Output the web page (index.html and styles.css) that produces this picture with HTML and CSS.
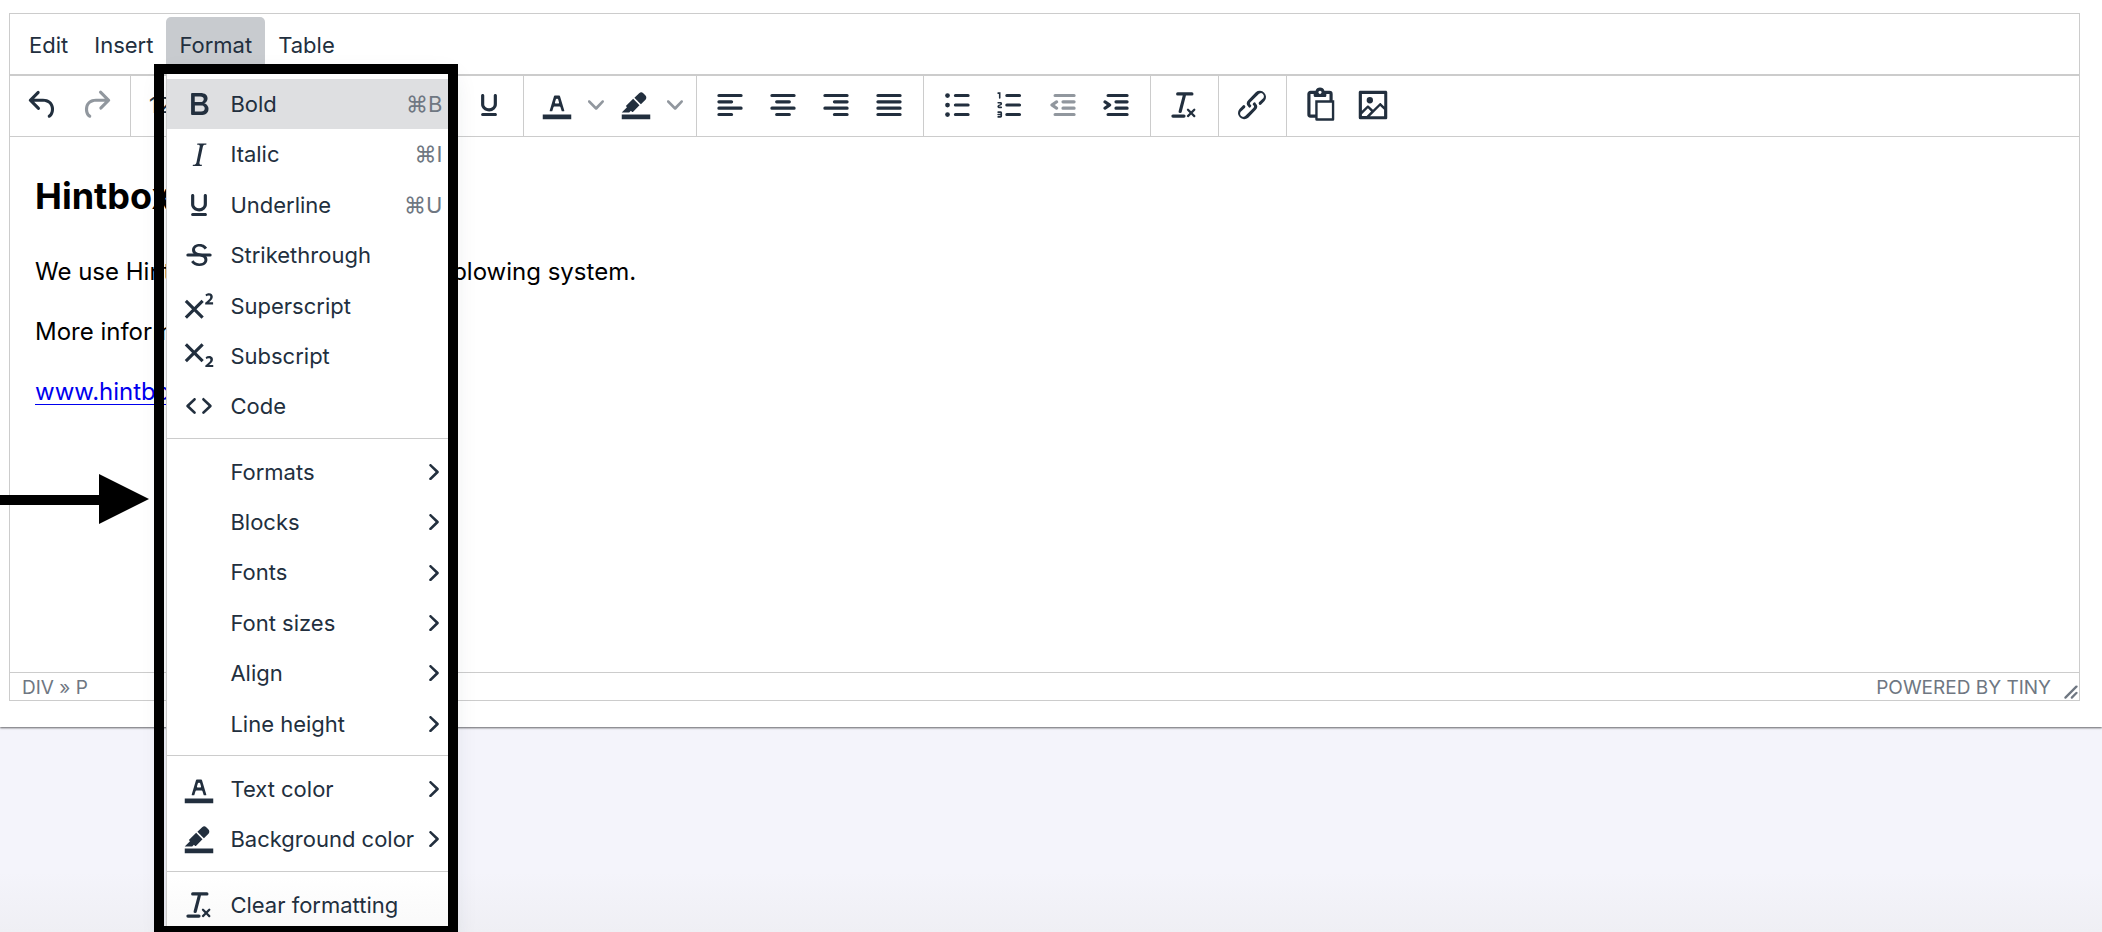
FILE: index.html
```html
<!DOCTYPE html>
<html lang="en">
<head>
<meta charset="utf-8">
<title>Editor</title>
<link rel="stylesheet" href="styles.css">
</head>
<body>
<svg class="sprite" aria-hidden="true">
  <symbol id="undo" viewBox="0 0 24 24"><path d="M6.4 8H12c3.7 0 6.2 2 6.8 5.1.6 2.7-.4 5.6-2.3 6.8a1 1 0 0 1-1-1.8c1.1-.6 1.8-2.7 1.4-4.6-.5-2.1-2.1-3.5-4.9-3.5H6.4l3.3 3.3a1 1 0 1 1-1.4 1.4l-5-5a1 1 0 0 1 0-1.4l5-5a1 1 0 0 1 1.4 1.4L6.4 8Z"/></symbol>
  <symbol id="redo" viewBox="0 0 24 24"><path d="M17.6 10H12c-2.8 0-4.4 1.4-4.9 3.5-.4 2 .3 4 1.4 4.6a1 1 0 1 1-1 1.8c-2-1.2-2.9-4.1-2.3-6.8.6-3 3-5.1 6.8-5.1h5.6l-3.3-3.3a1 1 0 1 1 1.4-1.4l5 5a1 1 0 0 1 0 1.4l-5 5a1 1 0 0 1-1.4-1.4l3.3-3.3Z"/></symbol>
  <symbol id="bold" viewBox="0 0 24 24"><path fill-rule="evenodd" d="M7.8 19c-.3 0-.5 0-.6-.2l-.2-.5V5.7c0-.2 0-.4.2-.5l.6-.2h5c1.5 0 2.7.3 3.5 1 .7.6 1.1 1.4 1.1 2.5a3 3 0 0 1-.6 1.9c-.4.6-1 1-1.6 1.2.4.1.9.3 1.3.6s.8.7 1 1.2c.4.4.5 1 .5 1.6 0 1.3-.4 2.3-1.3 3-.8.7-2.1 1-3.8 1H7.8Zm5-8.3c.6 0 1.2-.1 1.6-.5.4-.3.6-.7.6-1.3 0-1.1-.8-1.7-2.3-1.7H9.3v3.5h3.4Zm.5 6c.7 0 1.3-.1 1.7-.4.4-.4.6-.9.6-1.5s-.2-1-.7-1.4c-.4-.3-1-.4-2-.4H9.4v3.8h4Z"/></symbol>
  <symbol id="italic" viewBox="0 0 24 24"><path d="m16.7 4.7-.1.9h-.3c-.6 0-1 0-1.4.3-.3.3-.4.6-.5 1.1l-2.1 9.8v.6c0 .5.4.8 1.4.8h.2l-.2.8H8l.2-.8h.2c1.1 0 1.8-.5 2-1.5l2-9.8.1-.5c0-.6-.4-.8-1.4-.8h-.3l.2-.9h5.8Z"/></symbol>
  <symbol id="underline" viewBox="0 0 24 24"><path d="M16 5c.6 0 1 .4 1 1v5.5a4 4 0 0 1-.4 1.8l-1 1.4a5.3 5.3 0 0 1-5.5 1 5 5 0 0 1-1.6-1c-.5-.4-.8-.9-1.1-1.4a4 4 0 0 1-.4-1.8V6c0-.6.4-1 1-1s1 .4 1 1v5.5c0 .3 0 .6.2 1l.6.7a3.3 3.3 0 0 0 2.2.8 3.4 3.4 0 0 0 2.2-.8c.3-.2.4-.5.6-.8l.2-.9V6c0-.6.4-1 1-1ZM8 17h8c.6 0 1 .4 1 1s-.4 1-1 1H8a1 1 0 0 1 0-2Z"/></symbol>
  <symbol id="strike" viewBox="0 0 24 24"><path d="M15.6 8.5c-.5-.7-1-1.1-1.3-1.3-.6-.4-1.3-.6-2-.6-2.7 0-2.8 1.7-2.8 2.1 0 1.6 1.8 2 3.2 2.3 4.4.9 4.6 2.8 4.6 3.9 0 1.4-.7 4.1-5 4.1A6.2 6.2 0 0 1 7 16.4l1.5-1.1c.4.6 1.6 2 3.7 2 1.6 0 2.5-.4 3-1.2.4-.8.3-2-.8-2.6-.7-.4-1.6-.7-2.9-1-1-.2-3.9-.8-3.9-3.6C7.6 6 10.3 5 12.4 5c2.9 0 4.2 1.6 4.7 2.4l-1.5 1.1Z"/><path d="M5 11h14a1 1 0 0 1 0 2H5a1 1 0 0 1 0-2Z"/></symbol>
  <symbol id="sup" viewBox="0 0 24 24"><path d="M15 9.4 10.4 14l4.6 4.6-1.4 1.4L9 15.4 4.4 20 3 18.6 7.6 14 3 9.4 4.4 8 9 12.6 13.6 8 15 9.4Zm5.9 1.6h-5v-1l1-.8 1.7-1.6c.3-.5.5-.9.5-1.3 0-.3 0-.5-.2-.7-.2-.2-.5-.3-.9-.3l-.8.2-.7.4-.4-1.2c.2-.2.5-.4 1-.5.3-.2.8-.2 1.2-.2.8 0 1.4.2 1.8.6.4.4.6 1 .6 1.6 0 .5-.2 1-.5 1.5l-1.3 1.4-.6.5h2.6V11Z"/></symbol>
  <symbol id="sub" viewBox="0 0 24 24"><path d="m10.4 10 4.6 4.6-1.4 1.4L9 11.4 4.4 16 3 14.6 7.6 10 3 5.4 4.4 4 9 8.6 13.6 4 15 5.4 10.4 10ZM21 19h-5v-1l1-.8 1.7-1.6c.3-.4.5-.8.5-1.2 0-.3 0-.6-.2-.7-.2-.2-.5-.3-.9-.3a2 2 0 0 0-.8.2l-.7.3-.4-1.1 1-.6 1.2-.2c.8 0 1.4.3 1.8.7.4.4.6.9.6 1.5s-.2 1.1-.5 1.6a8 8 0 0 1-1.3 1.3l-.6.6h2.6V19Z"/></symbol>
  <symbol id="code" viewBox="0 0 24 24"><path d="M9.8 15.7c.3.3.3.8 0 1-.3.4-.9.4-1.2 0l-4.4-4.1a.8.8 0 0 1 0-1.2l4.4-4.2c.3-.3.9-.3 1.2 0 .3.3.3.8 0 1.1L6 12l3.8 3.7ZM14.2 15.7c-.3.3-.3.8 0 1 .4.4.9.4 1.2 0l4.4-4.1c.3-.3.3-.9 0-1.2l-4.4-4.2a.8.8 0 0 0-1.2 0c-.3.3-.3.8 0 1.1L18 12l-3.8 3.7Z"/></symbol>
  <symbol id="textcolor" viewBox="0 0 24 24"><path d="M3 18h18v3H3z"/><path fill-rule="evenodd" d="M8.7 16h-.8a.5.5 0 0 1-.5-.6l2.7-9c.1-.3.3-.4.5-.4h2.8c.2 0 .4.1.5.4l2.7 9a.5.5 0 0 1-.5.6h-.8a.5.5 0 0 1-.4-.4l-.7-2.2c0-.3-.3-.4-.5-.4h-3.4c-.2 0-.4.1-.5.4l-.7 2.2c0 .3-.2.4-.4.4Zm2.6-7.6-.6 2a.5.5 0 0 0 .5.6h1.6a.5.5 0 0 0 .5-.6l-.6-2c0-.3-.3-.4-.5-.4h-.4c-.2 0-.4.1-.5.4Z"/></symbol>
  <symbol id="highlight" viewBox="0 0 24 24"><path d="M3 18h18v3H3z"/><path d="M7.7 16.7H3l3.3-3.3-.7-.8L10.2 8l4 4.1-4 4.2c-.2.2-.6.2-.8 0l-.6-.7-1.1 1.1Zm5-7.5L11 7.4l3-2.9a2 2 0 0 1 2.6 0L18 6c.7.7.7 2 0 2.7l-2.9 2.9-1.8-1.8-.5-.6"/></symbol>
  <symbol id="left" viewBox="0 0 24 24"><path d="M5 5h14a1 1 0 0 1 0 2H5a1 1 0 0 1 0-2Zm0 4h8a1 1 0 0 1 0 2H5a1 1 0 0 1 0-2Zm0 8h8a1 1 0 0 1 0 2H5a1 1 0 0 1 0-2Zm0-4h14a1 1 0 0 1 0 2H5a1 1 0 0 1 0-2Z"/></symbol>
  <symbol id="center" viewBox="0 0 24 24"><path d="M5 5h14a1 1 0 0 1 0 2H5a1 1 0 0 1 0-2Zm3 4h8a1 1 0 0 1 0 2H8a1 1 0 0 1 0-2Zm0 8h8a1 1 0 0 1 0 2H8a1 1 0 0 1 0-2Zm-3-4h14a1 1 0 0 1 0 2H5a1 1 0 0 1 0-2Z"/></symbol>
  <symbol id="right" viewBox="0 0 24 24"><path d="M5 5h14a1 1 0 0 1 0 2H5a1 1 0 0 1 0-2Zm6 4h8a1 1 0 0 1 0 2h-8a1 1 0 0 1 0-2Zm0 8h8a1 1 0 0 1 0 2h-8a1 1 0 0 1 0-2Zm-6-4h14a1 1 0 0 1 0 2H5a1 1 0 0 1 0-2Z"/></symbol>
  <symbol id="justify" viewBox="0 0 24 24"><path d="M5 5h14a1 1 0 0 1 0 2H5a1 1 0 0 1 0-2Zm0 4h14a1 1 0 0 1 0 2H5a1 1 0 0 1 0-2Zm0 4h14a1 1 0 0 1 0 2H5a1 1 0 0 1 0-2Zm0 4h14a1 1 0 0 1 0 2H5a1 1 0 0 1 0-2Z"/></symbol>
  <symbol id="bullets" viewBox="0 0 24 24"><path d="M11 5h8a1 1 0 0 1 0 2h-8a1 1 0 0 1 0-2Zm0 6h8a1 1 0 0 1 0 2h-8a1 1 0 0 1 0-2Zm0 6h8a1 1 0 0 1 0 2h-8a1 1 0 0 1 0-2Z"/><circle cx="6" cy="6" r="1.5"/><circle cx="6" cy="12" r="1.5"/><circle cx="6" cy="18" r="1.5"/></symbol>
  <symbol id="numbers" viewBox="0 0 24 24"><path d="M10 17h8a1 1 0 0 1 0 2h-8a1 1 0 0 1 0-2Zm0-6h8a1 1 0 0 1 0 2h-8a1 1 0 0 1 0-2Zm0-6h8a1 1 0 0 1 0 2h-8a1 1 0 0 1 0-2ZM6 4v3.5c0 .3-.2.5-.5.5a.5.5 0 0 1-.5-.5V5h-.5a.5.5 0 0 1 0-1H6Zm-1 8.8.2.2h1.3c.3 0 .5.2.5.5s-.2.5-.5.5H4.9a1 1 0 0 1-.9-1V13c0-.4.3-.8.6-1l1.2-.4.2-.3a.2.2 0 0 0-.2-.2H4.5a.5.5 0 0 1-.5-.5c0-.3.2-.5.5-.5h1.6c.5 0 .9.4.9 1v.1c0 .4-.3.8-.6 1l-1.2.4-.2.3ZM7 17v2c0 .6-.4 1-1 1H4.5a.5.5 0 0 1 0-1h1.2c.2 0 .3-.1.3-.3 0-.2-.1-.3-.3-.3H4.4a.4.4 0 1 1 0-.8h1.3c.2 0 .3-.1.3-.3 0-.2-.1-.3-.3-.3H4.5a.5.5 0 1 1 0-1H6c.6 0 1 .4 1 1Z"/></symbol>
  <symbol id="outdent" viewBox="0 0 24 24"><path d="M7 5h12a1 1 0 0 1 0 2H7a1 1 0 1 1 0-2Zm5 4h7a1 1 0 0 1 0 2h-7a1 1 0 0 1 0-2Zm0 4h7a1 1 0 0 1 0 2h-7a1 1 0 0 1 0-2Zm-5 4h12a1 1 0 0 1 0 2H7a1 1 0 0 1 0-2Zm1.6-3.8a1 1 0 0 1-1.2 1.6l-3-2a1 1 0 0 1 0-1.6l3-2a1 1 0 0 1 1.2 1.6L6.8 12l1.8 1.2Z"/></symbol>
  <symbol id="indent" viewBox="0 0 24 24"><path d="M7 5h12a1 1 0 0 1 0 2H7a1 1 0 1 1 0-2Zm5 4h7a1 1 0 0 1 0 2h-7a1 1 0 0 1 0-2Zm0 4h7a1 1 0 0 1 0 2h-7a1 1 0 0 1 0-2Zm-5 4h12a1 1 0 0 1 0 2H7a1 1 0 0 1 0-2Zm-2.6-3.8L6.2 12l-1.8-1.2a1 1 0 0 1 1.2-1.6l3 2a1 1 0 0 1 0 1.6l-3 2a1 1 0 1 1-1.2-1.6Z"/></symbol>
  <symbol id="clear" viewBox="0 0 24 24"><path d="M13.2 6a1 1 0 0 1 0 .2l-2.6 10a1 1 0 0 1-1 .8h-.2a.8.8 0 0 1-.8-1l2.6-10H8a1 1 0 1 1 0-2h9a1 1 0 0 1 0 2h-3.8ZM5 18h7a1 1 0 0 1 0 2H5a1 1 0 0 1 0-2Zm13 1.5L16.5 18 15 19.5a.7.7 0 0 1-1-1l1.5-1.5-1.5-1.5a.7.7 0 0 1 1-1l1.5 1.5 1.5-1.5a.7.7 0 0 1 1 1L17.5 17l1.5 1.5a.7.7 0 0 1-1 1Z"/></symbol>
  <symbol id="link" viewBox="0 0 24 24"><path d="M6.2 12.3a1 1 0 0 1 1.4 1.4l-2 2a2 2 0 1 0 2.6 2.8l4.8-4.8a1 1 0 0 0 0-1.4 1 1 0 1 1 1.4-1.3 2.9 2.9 0 0 1 0 4L9.6 20a3.9 3.9 0 0 1-5.5-5.5l2-2Zm11.6-.6a1 1 0 0 1-1.4-1.4l2-2a2 2 0 1 0-2.6-2.8L11 10.3a1 1 0 0 0 0 1.4A1 1 0 1 1 9.6 13a2.9 2.9 0 0 1 0-4L14.4 4a3.9 3.9 0 0 1 5.5 5.5l-2 2Z"/></symbol>
  <symbol id="paste" viewBox="0 0 24 24"><path fill-rule="evenodd" d="M18 9V5h-2v1c0 .6-.4 1-1 1H9a1 1 0 0 1-1-1V5H6v13h3V9h9ZM9 20H6a2 2 0 0 1-2-2V5c0-1.1.9-2 2-2h3.2A3 3 0 0 1 12 1a3 3 0 0 1 2.8 2H18a2 2 0 0 1 2 2v4h1v12c0 .6-.4 1-1 1H10a1 1 0 0 1-1-1v-1Zm1.5-9.5v9.9h9v-9.9h-9ZM12 3a1 1 0 0 0-1 1c0 .5.4 1 1 1s1-.5 1-1-.4-1-1-1Z"/></symbol>
  <symbol id="image" viewBox="0 0 24 24"><path fill-rule="evenodd" d="m5 15.7 3.3-3.2c.3-.3.7-.3 1 0L12 15l4.1-4c.3-.4.8-.4 1 0l2 1.9V5H5v10.7ZM5 18V19h3l2.8-2.9-2-2L5 17.9Zm14-3-2.5-2.4-6.4 6.5H19v-4ZM4 3h16c.6 0 1 .4 1 1v16c0 .6-.4 1-1 1H4a1 1 0 0 1-1-1V4c0-.6.4-1 1-1Zm6 8a2 2 0 1 0 0-4 2 2 0 0 0 0 4Z"/></symbol>
  <symbol id="down" viewBox="0 0 10 10"><path d="M8.7 2.2c.3-.3.8-.3 1 0 .4.4.4.9 0 1.2L5.7 7.8c-.3.3-.9.3-1.2 0L.2 3.4a.8.8 0 0 1 0-1.2c.3-.3.8-.3 1.1 0L5 6l3.7-3.8Z"/></symbol>
  <symbol id="next" viewBox="0 0 10 10"><path d="M2.2 1.3a.8.8 0 0 1 0-1c.4-.4.9-.4 1.2 0l4.4 4.1c.3.4.3.9 0 1.2L3.4 9.8c-.3.3-.8.3-1.2 0a.8.8 0 0 1 0-1.1L6 5 2.2 1.3Z"/></symbol>
  <symbol id="resize" viewBox="0 0 10 10"><path d="M8.1 1.1A.5.5 0 1 1 9 2l-7 7A.5.5 0 1 1 1 8l7-7ZM8.1 5.1A.5.5 0 1 1 9 6l-3 3A.5.5 0 1 1 5 8l3-3Z"/></symbol>
</svg>

<main class="page">
  <div class="editor">
    <nav class="menubar">
      <button class="menu-button">Edit</button>
      <button class="menu-button">Insert</button>
      <div class="menu-holder">
        <button class="menu-button active" aria-expanded="true">Format</button>
        <div class="menu" role="menu">
          <div class="menu-group">
            <button class="item selected" role="menuitem"><svg class="icon"><use href="#bold"/></svg><span class="label">Bold</span><span class="keys">⌘B</span></button>
            <button class="item" role="menuitem"><svg class="icon"><use href="#italic"/></svg><span class="label">Italic</span><span class="keys">⌘I</span></button>
            <button class="item" role="menuitem"><svg class="icon"><use href="#underline"/></svg><span class="label">Underline</span><span class="keys">⌘U</span></button>
            <button class="item" role="menuitem"><svg class="icon"><use href="#strike"/></svg><span class="label">Strikethrough</span></button>
            <button class="item" role="menuitem"><svg class="icon"><use href="#sup"/></svg><span class="label">Superscript</span></button>
            <button class="item" role="menuitem"><svg class="icon"><use href="#sub"/></svg><span class="label">Subscript</span></button>
            <button class="item" role="menuitem"><svg class="icon"><use href="#code"/></svg><span class="label">Code</span></button>
          </div>
          <div class="menu-group">
            <button class="item" role="menuitem"><span class="icon"></span><span class="label">Formats</span><svg class="caret"><use href="#next"/></svg></button>
            <button class="item" role="menuitem"><span class="icon"></span><span class="label">Blocks</span><svg class="caret"><use href="#next"/></svg></button>
            <button class="item" role="menuitem"><span class="icon"></span><span class="label">Fonts</span><svg class="caret"><use href="#next"/></svg></button>
            <button class="item" role="menuitem"><span class="icon"></span><span class="label">Font sizes</span><svg class="caret"><use href="#next"/></svg></button>
            <button class="item" role="menuitem"><span class="icon"></span><span class="label">Align</span><svg class="caret"><use href="#next"/></svg></button>
            <button class="item" role="menuitem"><span class="icon"></span><span class="label">Line height</span><svg class="caret"><use href="#next"/></svg></button>
          </div>
          <div class="menu-group">
            <button class="item" role="menuitem"><svg class="icon"><use href="#textcolor"/></svg><span class="label">Text color</span><svg class="caret"><use href="#next"/></svg></button>
            <button class="item" role="menuitem"><svg class="icon"><use href="#highlight"/></svg><span class="label">Background color</span><svg class="caret"><use href="#next"/></svg></button>
          </div>
          <div class="menu-group">
            <button class="item" role="menuitem"><svg class="icon"><use href="#clear"/></svg><span class="label">Clear formatting</span></button>
          </div>
        </div>
      </div>
      <button class="menu-button">Table</button>
    </nav>

    <div class="toolbar" role="toolbar">
      <div class="tools">
        <button class="tool" aria-label="Undo"><svg class="icon"><use href="#undo"/></svg></button>
        <button class="tool" aria-label="Redo" disabled><svg class="icon"><use href="#redo"/></svg></button>
      </div>
      <div class="tools">
        <button class="size-button"><span>12pt</span><svg class="caret"><use href="#down"/></svg></button>
      </div>
      <div class="tools">
        <button class="tool" aria-label="Bold"><svg class="icon"><use href="#bold"/></svg></button>
        <button class="tool" aria-label="Italic"><svg class="icon"><use href="#italic"/></svg></button>
        <button class="tool" aria-label="Underline"><svg class="icon"><use href="#underline"/></svg></button>
      </div>
      <div class="tools">
        <button class="tool" aria-label="Text color"><svg class="icon"><use href="#textcolor"/></svg></button>
        <button class="tool-more" aria-label="Text color menu"><svg class="caret"><use href="#down"/></svg></button>
        <button class="tool" aria-label="Background color"><svg class="icon"><use href="#highlight"/></svg></button>
        <button class="tool-more" aria-label="Background color menu"><svg class="caret"><use href="#down"/></svg></button>
      </div>
      <div class="tools">
        <button class="tool" aria-label="Align left"><svg class="icon"><use href="#left"/></svg></button>
        <button class="tool" aria-label="Align center"><svg class="icon"><use href="#center"/></svg></button>
        <button class="tool" aria-label="Align right"><svg class="icon"><use href="#right"/></svg></button>
        <button class="tool" aria-label="Justify"><svg class="icon"><use href="#justify"/></svg></button>
      </div>
      <div class="tools">
        <button class="tool" aria-label="Bullet list"><svg class="icon"><use href="#bullets"/></svg></button>
        <button class="tool" aria-label="Numbered list"><svg class="icon"><use href="#numbers"/></svg></button>
        <button class="tool" aria-label="Decrease indent" disabled><svg class="icon"><use href="#outdent"/></svg></button>
        <button class="tool" aria-label="Increase indent"><svg class="icon"><use href="#indent"/></svg></button>
      </div>
      <div class="tools">
        <button class="tool" aria-label="Clear formatting"><svg class="icon"><use href="#clear"/></svg></button>
      </div>
      <div class="tools">
        <button class="tool" aria-label="Link"><svg class="icon"><use href="#link"/></svg></button>
      </div>
      <div class="tools">
        <button class="tool" aria-label="Paste"><svg class="icon"><use href="#paste"/></svg></button>
        <button class="tool" aria-label="Image"><svg class="icon"><use href="#image"/></svg></button>
      </div>
    </div>

    <article class="content">
      <h1>Hintbox</h1>
      <p>We use Hintbox as our digital whistleblowing system.</p>
      <p>More information:</p>
      <p><a href="#">www.hintbox.de</a></p>
    </article>

    <footer class="statusbar">
      <span>DIV » P</span>
      <span class="brand">POWERED BY TINY</span>
      <svg class="resize"><use href="#resize"/></svg>
    </footer>
  </div>
</main>

<svg class="arrow" viewBox="0 0 149 50" aria-hidden="true"><path d="M0 21h99V0l50 25-50 25V31H0z"/></svg>
<div class="frame"></div>
</body>
</html>
```
FILE: styles.css
```css
* {
  box-sizing: border-box;
}

body {
  position: relative;
  min-height: 100vh;
  margin: 0;
  overflow: hidden;
  background: linear-gradient(to top, #efeff4, #f4f4fb 60px);
  color: #222f3e;
  font-family: Inter, "DejaVu Sans", sans-serif;
  font-size: 22px;
}

button {
  margin: 0;
  padding: 0;
  border: 0;
  background: none;
  color: inherit;
  font: inherit;
}

svg {
  display: block;
  fill: currentColor;
}

.sprite {
  position: absolute;
  width: 0;
  height: 0;
}

.page {
  padding: 13px 22px 26px 9px;
  background: #fff;
  box-shadow: 0 1px 2px rgba(0, 0, 0, 0.6);
}

.editor {
  border: 1px solid #ccc;
}

.menubar {
  display: flex;
  padding: 3px 6px 2px;
  border-bottom: 2px solid #ccc;
}

.menu-button {
  height: 55px;
  padding: 1px 13px 0;
  border-radius: 5px;
}

.menu-button.active {
  background: #c8cbcf;
}

.menu-holder {
  position: relative;
}

.menu {
  position: absolute;
  z-index: 1;
  top: 100%;
  left: 0;
  width: 286px;
  padding: 6px 0;
  border: 1px solid #ccc;
  background: linear-gradient(to top, #f8f8f8, #fff 60px);
  box-shadow: 0 6px 24px rgba(34, 47, 62, 0.12);
}

.menu-group + .menu-group {
  margin-top: 6px;
  padding-top: 8px;
  border-top: 1px solid #ccc;
}

.item {
  display: flex;
  align-items: center;
  width: 100%;
  padding: 0 9px 0 13px;
  line-height: 2.29;
  text-align: left;
}

.item.selected {
  background: #dedfe1;
}

.icon {
  flex: none;
  width: 38px;
  height: 38px;
}

.label {
  flex: 1;
  padding-left: 12px;
  white-space: nowrap;
}

.keys {
  color: #6f7782;
}

.caret {
  flex: none;
  width: 16px;
  height: 16px;
}

.toolbar {
  display: flex;
  border-bottom: 1px solid #ccc;
}

.tools {
  display: flex;
  align-items: center;
  height: 60px;
  padding: 0 8px 2px 6px;
}

.tools + .tools {
  border-left: 1px solid #ccc;
}

.tool {
  display: flex;
  justify-content: center;
  width: 53px;
}

.tool:disabled,
.tool-more {
  color: #91979e;
}

.tool-more {
  display: flex;
  justify-content: center;
  width: 26px;
}

.size-button {
  display: flex;
  align-items: center;
  justify-content: space-between;
  width: 204px;
  padding: 0 12px;
}

.content {
  min-height: 535px;
  padding: 37px 25px 0;
  color: #000;
  font-size: 24px;
  line-height: 36px;
}

.content h1 {
  margin: 0 0 36px;
  font-size: 36px;
  line-height: 44px;
}

.content p {
  margin: 0 0 24px;
}

.content a {
  color: #00e;
  text-decoration-thickness: 1px;
  text-underline-offset: 4px;
}

.statusbar {
  display: flex;
  align-items: center;
  height: 28px;
  padding: 1px 0 0 12px;
  border-top: 1px solid #ccc;
  color: #6f7782;
  font-size: 19px;
}

.brand {
  margin-left: auto;
}

.resize {
  align-self: flex-end;
  width: 16px;
  height: 16px;
  margin-left: 12px;
}

.arrow {
  position: absolute;
  top: 474px;
  left: 0;
  width: 149px;
  height: 50px;
  fill: #000;
}

.frame {
  position: absolute;
  z-index: 2;
  top: 64px;
  left: 154px;
  width: 304px;
  height: 872px;
  border: 10px solid #000;
}
```
